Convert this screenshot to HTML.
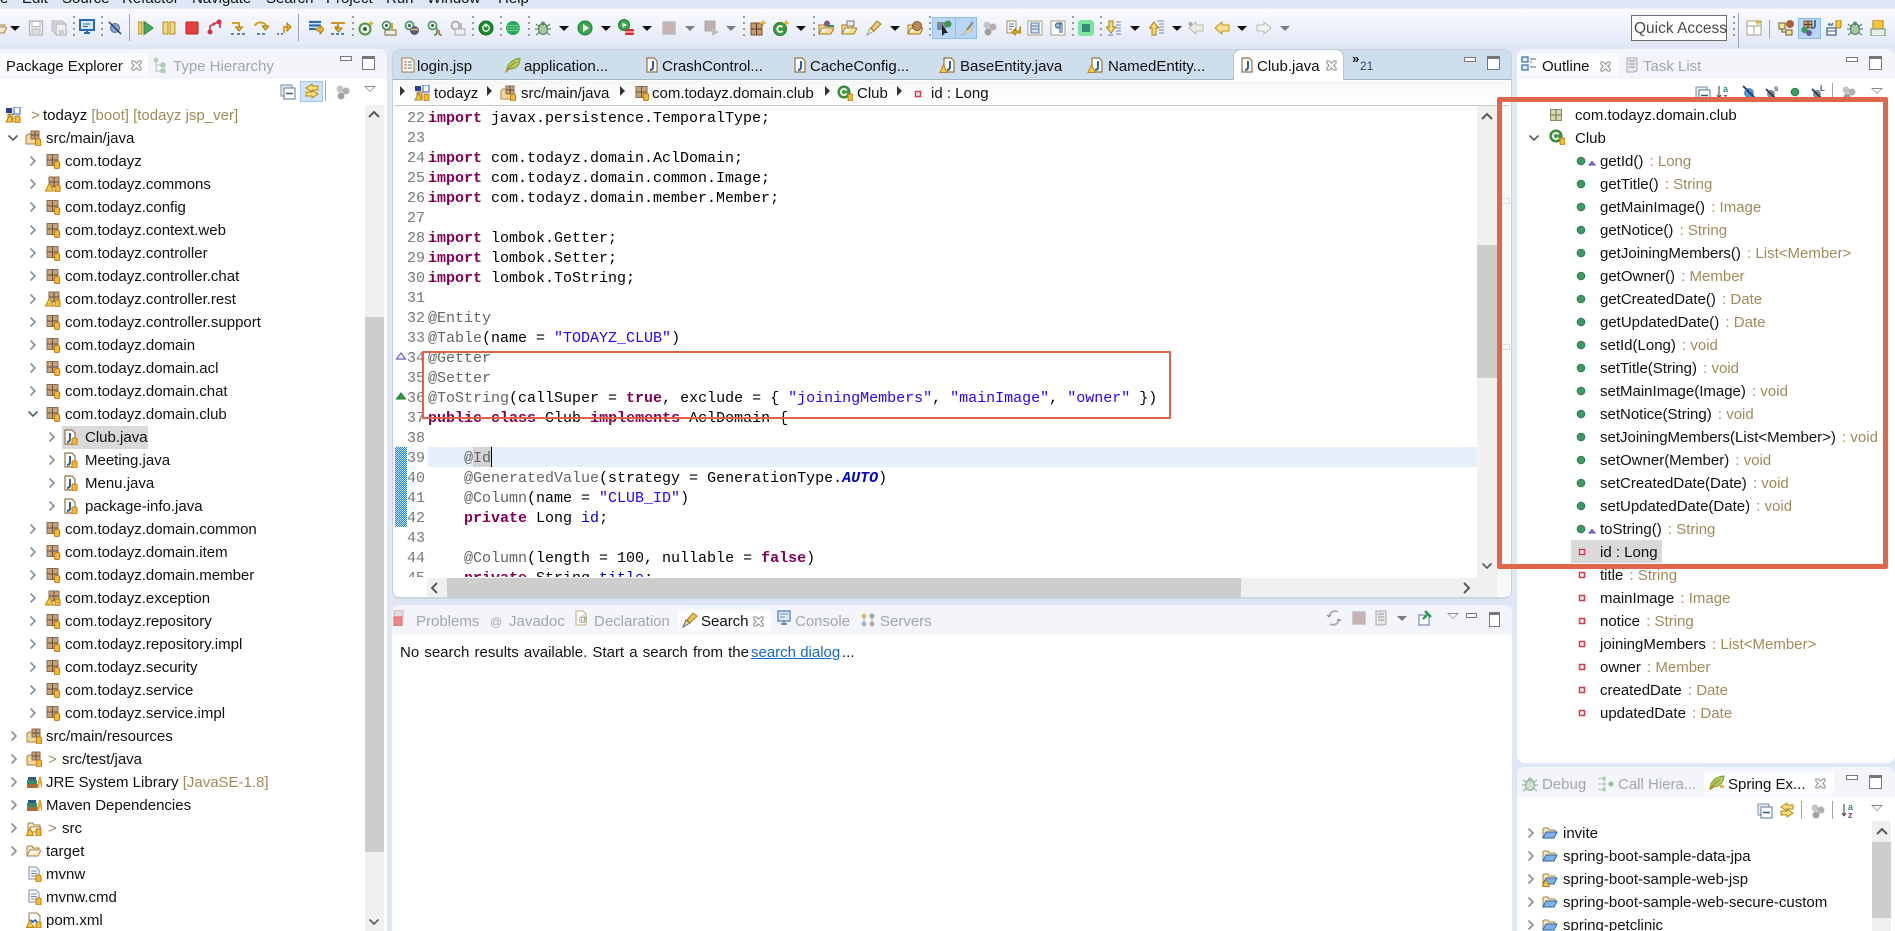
<!DOCTYPE html>
<html lang="en"><head><meta charset="utf-8"><title>Eclipse</title>
<style>
html,body{margin:0;padding:0;width:1895px;height:931px;overflow:hidden;background:#dfe6f6}
body{position:relative;font:15px/24px "Liberation Sans","Noto Sans CJK KR",sans-serif;color:#111}
.abs,.t,.i,.box{position:absolute}
.t{white-space:pre;line-height:24px;margin-top:1px}
.i{width:16px;height:16px;overflow:visible}
.menu span{position:absolute;top:-13px;white-space:pre;line-height:24px;font-size:15px}
.tb{position:absolute;left:0;top:8px;width:1895px;height:41px;background:linear-gradient(#fafbfe,#e0e6f5);border-top:1px solid #efefef;box-sizing:border-box}
.dots{position:absolute;top:16px;height:24px;width:2px;background:repeating-linear-gradient(#9a9a9a 0 2px,transparent 2px 6px)}
.sol{position:absolute;top:14px;height:27px;width:1px;background:#9fa5b0}
.dd{position:absolute;top:26px;width:0;height:0;border-left:5px solid transparent;border-right:5px solid transparent;border-top:5px solid #111;margin-left:-5px}
.dd.g{border-top-color:#7d7d7d}
.panel{position:absolute;background:#fff;border-radius:8px 8px 0 0;overflow:hidden}
.tabs{position:absolute;left:0;top:0;right:0;height:30px;background:#f3f5fb}
.act{position:absolute;top:0;height:30px;background:linear-gradient(#eef2fa,#fff 30%,#fff 60%,#f5f7fc);border-radius:8px 8px 0 0}
.gr{color:#a3a6ab}
.min{position:absolute;width:12px;height:5px;border:1px solid #777;box-sizing:border-box;background:#fff}
.max{position:absolute;width:13px;height:14px;border:1px solid #777;border-top-width:3px;box-sizing:border-box;background:#fff}
.menuv{position:absolute;width:0;height:0;border-left:6px solid transparent;border-right:6px solid transparent;border-top:6px solid #8a8a8a}
.menuv:after{content:"";position:absolute;left:-4px;top:-5px;border-left:4px solid transparent;border-right:4px solid transparent;border-top:4px solid #fff}
.cl{position:absolute;width:11px;height:11px;overflow:visible}
.r{position:absolute;left:0;height:16px;width:365px}
.r svg{position:absolute;top:0;width:16px;height:16px;overflow:visible}
.r span{position:absolute;top:-3px;line-height:24px;white-space:pre}
.p .a{left:25px}.p .b{left:45px}.p span{left:65px}
.q .a{left:6px}.q .b{left:26px}.q span{left:46px}
.u .a{left:44px}.u .b{left:62px}.u span{left:85px}
.n{color:#a18a5a;margin-left:2px}
.sb{position:absolute;background:#f0f0f0}
.th{position:absolute;background:#cdcdcd}
pre{margin:0;font:15px/20px "Liberation Mono",monospace;position:absolute}
b.k{color:#7f0055;font-weight:bold}
i.a{font-style:normal;color:#646464}
i.s{font-style:normal;color:#2a00ff}
i.f{font-style:normal;color:#0000c0}
b.e{color:#0000c0;font-style:italic;font-weight:bold}
.red{position:absolute;border:2px solid #d9654a;box-sizing:border-box}
.red2{position:absolute;border:5px solid #e0664a;box-sizing:border-box;border-radius:2px}
</style></head>
<body>
<svg width="0" height="0" style="position:absolute">
<defs>
<symbol id="x" viewBox="0 0 12 12"><path d="M1 1h2.500L6 3.500 8.500 1H11v2.500L8.500 6 11 8.500V11H8.500L6 8.500 3.500 11H1V8.500L3.500 6 1 3.500z" fill="#fff" stroke="#808080"/></symbol>
<symbol id="ar" viewBox="0 0 16 16"><path d="M5.500 3.500l4.500 4.500-4.500 4.500" fill="none" stroke="#8e8e8e" stroke-width="1.600"/></symbol>
<symbol id="ad" viewBox="0 0 16 16"><path d="M3.500 5.500l4.500 4.500 4.500-4.500" fill="none" stroke="#5a5a5a" stroke-width="1.600"/></symbol>
<symbol id="pkg" viewBox="0 0 16 16"><rect x="2" y="1.500" width="11" height="11" fill="#c7a37b" stroke="#8a6a50"/><path d="M7.500 1.500v11M2 7h11" stroke="#6e4f38"/><rect x="9.500" y="8.500" width="5" height="7" rx="1.400" fill="#f4b93a" stroke="#bf7c12"/></symbol>
<symbol id="pkw" viewBox="0 0 16 16"><rect x="4" y="1" width="10" height="10" fill="#c7a37b" stroke="#8a6a50"/><path d="M9 1v10M4 6h10" stroke="#6e4f38"/><rect x="10" y="9" width="5" height="7" rx="1.400" fill="#f4b93a" stroke="#bf7c12"/><path d="M4.500 7l4 8h-8z" fill="#f6c945" stroke="#b88313"/></symbol>
<symbol id="src" viewBox="0 0 16 16"><path d="M1 14V6l2-2h3l1 1h6v9z" fill="#f1d9a0" stroke="#a5824a"/><rect x="6" y="1" width="8" height="8" fill="#c7a37b" stroke="#8a6a50"/><path d="M10 1v8M6 5h8" stroke="#6e4f38"/><rect x="10.500" y="9" width="5" height="7" rx="1.400" fill="#f4b93a" stroke="#bf7c12"/></symbol>
<symbol id="prj" viewBox="0 0 16 16"><path d="M3 14V7h5v7z" fill="#e8c46c" stroke="#a5824a"/><rect x="1" y="1" width="6" height="5" fill="#2a3f9a"/><rect x="9" y="0" width="6" height="7" fill="#fff" stroke="#2a5ac8"/><rect x="10" y="9" width="5" height="7" rx="1.400" fill="#f4b93a" stroke="#bf7c12"/><path d="M5 8l3 7H1z" fill="#f6c945" stroke="#b88313"/></symbol>
<symbol id="jv" viewBox="0 0 16 16"><path d="M3 1h7l3 3v11H3z" fill="#fff" stroke="#8f7540" stroke-width="1.200"/><path d="M9 4v6q0 3-3 3" stroke="#2e5f99" stroke-width="2" fill="none"/></symbol>
<symbol id="jw" viewBox="0 0 16 16"><path d="M5 1h7l3 3v11H5z" fill="#fff" stroke="#8f7540" stroke-width="1.200"/><path d="M11 4v6q0 3-3 3" stroke="#2e5f99" stroke-width="2" fill="none"/><path d="M4.500 8l3.500 7.500H1z" fill="#f6c945" stroke="#b88313"/></symbol>
<symbol id="jd" viewBox="0 0 16 16"><path d="M3 1h7l3 3v11H3z" fill="#fff" stroke="#8f7540" stroke-width="1.200"/><path d="M8 4v6q0 3-3 3" stroke="#2e5f99" stroke-width="2" fill="none"/><rect x="10" y="9" width="5" height="7" rx="1.400" fill="#f4b93a" stroke="#bf7c12"/></symbol>
<symbol id="lib" viewBox="0 0 16 16"><rect x="1" y="10" width="11" height="4" fill="#a86c3c"/><rect x="1" y="6" width="10" height="4" fill="#3a8a6a"/><rect x="2" y="3" width="8" height="3" fill="#2a5c8c"/><path d="M12 14l2-11 2 11" fill="none" stroke="#e0a830" stroke-width="2"/></symbol>
<symbol id="fo" viewBox="0 0 16 16"><path d="M1 13V4l1-1h4l1 2h6v2H4l-3 6h11l3-6" fill="#f8e8bf" stroke="#a5824a"/></symbol>
<symbol id="fob" viewBox="0 0 16 16"><path d="M1 13V4l1-1h4l1 2h6v2" fill="#f8e8bf" stroke="#a5824a"/><path d="M4 7h11l-3 6H1z" fill="#7fb2e8" stroke="#2a66a8"/></symbol>
<symbol id="fow" viewBox="0 0 16 16"><path d="M1 13V4l1-1h4l1 2h6v2" fill="#f8e8bf" stroke="#a5824a"/><path d="M4 7h11l-3 6H1z" fill="#7fb2e8" stroke="#2a66a8"/><path d="M4 8l3.500 7.500H.5z" fill="#f6c945" stroke="#b88313"/></symbol>
<symbol id="fw" viewBox="0 0 16 16"><path d="M2 12V4l1-1h4l1 2h6v2H5l-3 5h10l3-5" fill="#f8e8bf" stroke="#a5824a"/><rect x="10" y="9" width="5" height="7" rx="1.400" fill="#f4b93a" stroke="#bf7c12"/><path d="M4 8l3.500 7.500H.5z" fill="#f6c945" stroke="#b88313"/></symbol>
<symbol id="doc" viewBox="0 0 16 16"><path d="M3 1h7l3 3v9H3z" fill="#fff" stroke="#7a8aa8"/><path d="M5 5h6M5 7.500h6M5 10h6" stroke="#6a8ac0"/><rect x="10" y="9" width="5" height="7" rx="1.400" fill="#f4b93a" stroke="#bf7c12"/></symbol>
<symbol id="xml" viewBox="0 0 16 16"><path d="M3 1h8l3 3v11H3z" fill="#fff" stroke="#a07a3c"/><path d="M5 8l2 2 2-2 2 2" stroke="#2a5ac8" fill="none" stroke-width="1.600"/><path d="M4 8l3.500 7.500H.5z" fill="#f6c945" stroke="#b88313"/><rect x="10" y="10" width="5" height="6" rx="1.400" fill="#f4b93a" stroke="#bf7c12"/></symbol>
<symbol id="m" viewBox="0 0 16 16"><circle cx="8" cy="8" r="3.800" fill="#3e9a63" stroke="#2d7a4d"/></symbol>
<symbol id="fd" viewBox="0 0 16 16"><rect x="5.500" y="5.500" width="5" height="5" fill="#fdf0f0" stroke="#d83c4c" stroke-width="1.500"/></symbol>
<symbol id="ov" viewBox="0 0 16 16"><path d="M8 6.500l3 3.500h-6z" fill="#9a8cd8" stroke="#5a48b0"/></symbol>
<symbol id="pk2" viewBox="0 0 16 16"><rect x="2.500" y="2.500" width="11" height="11" fill="#d8d8b0" stroke="#8a8a60"/><path d="M8 2.500v11M2.500 8h11" stroke="#6e6e4a"/></symbol>
<symbol id="cj" viewBox="0 0 16 16"><circle cx="7" cy="7" r="6" fill="#3e9a40" stroke="#2a7a2e"/><path d="M9.500 5.500a3 3 0 1 0 0 3" stroke="#fff" stroke-width="1.800" fill="none"/><rect x="11" y="9" width="5" height="7" rx="1.400" fill="#f4b93a" stroke="#bf7c12"/></symbol>
<symbol id="col" viewBox="0 0 16 16"><rect x="1" y="1" width="11" height="11" fill="#e8eef5" stroke="#7a8ea8"/><rect x="4" y="4" width="11" height="11" fill="#fff" stroke="#5a7a9a"/><path d="M6 9.500h7" stroke="#2a5f8a" stroke-width="1.500"/></symbol>
<symbol id="lnk" viewBox="0 0 16 16"><path d="M8 1L2 5l6 4V7h6V3H8z" fill="#f8dc80" stroke="#b68410"/><path d="M8 7l6 4-6 4v-2H2V9h6z" fill="#f8dc80" stroke="#b68410"/></symbol>
<symbol id="gry" viewBox="0 0 16 16"><circle cx="5" cy="5" r="3.500" fill="#c4c4c4"/><circle cx="11" cy="7" r="3.500" fill="#b0b0b0"/><circle cx="6" cy="12" r="3.500" fill="#a0a0a0"/></symbol>
<symbol id="save" viewBox="0 0 16 16"><rect x="1.500" y="1" width="13" height="14" fill="#eee" stroke="#b2b2b2" stroke-width="1.200"/><rect x="4" y="1.500" width="8" height="5" fill="#fff" stroke="#bbb"/><rect x="4" y="9" width="8" height="6" fill="#ddd" stroke="#bbb"/></symbol>
<symbol id="savea" viewBox="0 0 16 16"><rect x="1" y="0" width="10" height="11" fill="#e8e8e8" stroke="#bbb"/><rect x="3" y="2" width="10" height="11" fill="#eee" stroke="#b5b5b5"/><rect x="5" y="4" width="10" height="11" fill="#eee" stroke="#aaa"/><rect x="8" y="10" width="5" height="5" fill="#ccc"/></symbol>
<symbol id="scr" viewBox="0 0 16 16"><rect x="1" y="1" width="14" height="10" fill="#d8e8f8" stroke="#2a6ab0" stroke-width="2"/><path d="M4 5h7M4 7.500h5" stroke="#2a6ab0"/><path d="M5 14h6M8 11v3" stroke="#2a6ab0" stroke-width="2"/></symbol>
<symbol id="skip" viewBox="0 0 16 16"><circle cx="8" cy="8" r="4.500" fill="#8aa8d0" stroke="#4a6a98"/><path d="M2 2l12 12" stroke="#2a4a80" stroke-width="1.600"/></symbol>
<symbol id="res" viewBox="0 0 16 16"><rect x="0" y="2" width="4" height="12" fill="#f0d060" stroke="#b89020"/><path d="M6 1.500l9 6.500-9 6.500z" fill="#4aa85a" stroke="#2f8040"/></symbol>
<symbol id="pau" viewBox="0 0 16 16"><rect x="2" y="2" width="5" height="12" fill="#f0d880" stroke="#b89020"/><rect x="9" y="2" width="5" height="12" fill="#f0d880" stroke="#b89020"/></symbol>
<symbol id="stp" viewBox="0 0 16 16"><rect x="2" y="2" width="12" height="12" rx="1" fill="#e84040" stroke="#b82020"/></symbol>
<symbol id="dis" viewBox="0 0 16 16"><path d="M3 14V7l10-5v7" fill="none" stroke="#c03040" stroke-width="1.500"/><circle cx="3" cy="13" r="2.500" fill="#d83040"/><circle cx="12" cy="3" r="2.500" fill="#d83040"/><circle cx="7" cy="5" r="1.500" fill="#d83040"/></symbol>
<symbol id="si" viewBox="0 0 16 16"><path d="M2 3h7v5" fill="none" stroke="#d8a020" stroke-width="2"/><path d="M5.500 7h7L9 11z" fill="#f0c030" stroke="#a87c10"/><path d="M1 14h3M7 14h3M12 14h3" stroke="#2a5f9a" stroke-width="1.500"/></symbol>
<symbol id="so" viewBox="0 0 16 16"><path d="M2 6a5.500 4 0 0 1 11 1" fill="none" stroke="#d8a020" stroke-width="2"/><path d="M9 6h7l-3.500 4z" fill="#f0c030" stroke="#a87c10"/><path d="M4 14h3M9 14h3" stroke="#2a5f9a" stroke-width="1.500"/></symbol>
<symbol id="sr" viewBox="0 0 16 16"><path d="M8 13V7h4" fill="none" stroke="#d8a020" stroke-width="2"/><path d="M11 3v8l4-4z" fill="#f0c030" stroke="#a87c10"/><path d="M1 14h2M5 14h2" stroke="#2a5f9a" stroke-width="1.500"/></symbol>
<symbol id="drp" viewBox="0 0 16 16"><path d="M1 2h12M1 5.500h12M1 9h7" stroke="#2a6ab0" stroke-width="2.200"/><path d="M9 8h3V5l4 4.500-4 4.500v-3H9z" fill="#f0c030" stroke="#a87c10"/></symbol>
<symbol id="flt" viewBox="0 0 16 16"><path d="M1 3h14M5 7h3M8 3v8" stroke="#c89420" stroke-width="2" fill="none"/><path d="M5 8h7l-3.500 4z" fill="#f0c030" stroke="#a87c10"/><path d="M1 14h3M6 14h3M11 14h3" stroke="#2a5f9a" stroke-width="1.500"/></symbol>
<symbol id="ring" viewBox="0 0 16 16"><circle cx="7" cy="9" r="5.500" fill="#fff" stroke="#4a9a3a" stroke-width="2"/><circle cx="7" cy="9" r="2" fill="#2a6a3a"/><path d="M13 1v5M10.500 3.500h5" stroke="#e0b030" stroke-width="1.500"/></symbol>
<symbol id="ring2" viewBox="0 0 16 16"><circle cx="5.500" cy="5.500" r="4" fill="#fff" stroke="#4a9a6a" stroke-width="1.800"/><circle cx="5.500" cy="5.500" r="1.500" fill="#2a6a3a"/><rect x="4" y="10" width="11" height="5" fill="#eee" stroke="#7a6a30"/><path d="M11 3v6" stroke="#d8a020" stroke-width="2"/></symbol>
<symbol id="ring3" viewBox="0 0 16 16"><circle cx="5.500" cy="5.500" r="4" fill="#fff" stroke="#4a9a6a" stroke-width="1.800"/><circle cx="5.500" cy="5.500" r="1.500" fill="#2a6a3a"/><circle cx="10.500" cy="10.500" r="4.500" fill="#5a5a7a"/><path d="M7 9.500h7" stroke="#e8c060" stroke-width="1.600"/></symbol>
<symbol id="ring4" viewBox="0 0 16 16"><circle cx="5.500" cy="5.500" r="4" fill="#fff" stroke="#4a9a6a" stroke-width="1.800"/><circle cx="5.500" cy="5.500" r="1.500" fill="#2a6a3a"/><path d="M7 15q3 0 3-3V8" stroke="#3a8a3a" stroke-width="1.500" fill="none"/><path d="M12 10v3q0 2 3 2" stroke="#c03838" stroke-width="1.300" fill="none"/></symbol>
<symbol id="ring5" viewBox="0 0 16 16"><circle cx="5.500" cy="5.500" r="4" fill="#eee" stroke="#aaa" stroke-width="1.800"/><rect x="5" y="9" width="10" height="6" fill="#eee" stroke="#aaa"/><path d="M11 3v6" stroke="#bbb" stroke-width="2"/></symbol>
<symbol id="pow" viewBox="0 0 16 16"><circle cx="8" cy="8" r="7" fill="#1a8a2a" stroke="#0e6a1a"/><circle cx="8" cy="8" r="3.200" fill="none" stroke="#fff" stroke-width="1.300"/><path d="M8 3.500v4" stroke="#fff" stroke-width="1.500"/></symbol>
<symbol id="bal" viewBox="0 0 16 16"><circle cx="8" cy="8" r="7" fill="#2aa85a"/><path d="M1 5.500h14M1 8h14M1 10.500h14" stroke="#8ad8a8" stroke-width=".8"/></symbol>
<symbol id="bug" viewBox="0 0 16 16"><ellipse cx="8" cy="9" rx="4.500" ry="5.500" fill="#a8c898" stroke="#4a7a5a"/><circle cx="8" cy="3.500" r="2" fill="#5a8a7a"/><path d="M1 4l4 3M15 4l-4 3M0 9h4M16 9h-4M1 15l4-3M15 15l-4-3" stroke="#3a6a5a"/></symbol>
<symbol id="run" viewBox="0 0 16 16"><circle cx="8" cy="8" r="7" fill="#3aa84a" stroke="#1e7a30"/><path d="M6 4l6 4-6 4z" fill="#fff"/></symbol>
<symbol id="rex" viewBox="0 0 16 16"><circle cx="6" cy="6" r="5.500" fill="#3aa84a" stroke="#1e7a30"/><path d="M4.500 3.500l4.500 2.500-4.500 2.500z" fill="#fff"/><rect x="7" y="10" width="9" height="6" rx="1" fill="#e02828"/><path d="M7 13h9" stroke="#fff"/></symbol>
<symbol id="sg" viewBox="0 0 16 16"><rect x="2" y="2" width="12" height="12" fill="#c8b2b4" stroke="#bbb" stroke-width="1.500"/></symbol>
<symbol id="g2" viewBox="0 0 16 16"><rect x="1" y="1" width="10" height="10" fill="#c4aeb0" stroke="#aaa"/><path d="M8 8l7 4-7 4z" fill="#b8c0b8"/></symbol>
<symbol id="npk" viewBox="0 0 16 16"><rect x="1" y="3" width="11" height="12" fill="#c79a6b" stroke="#7a5630"/><path d="M6.500 3v12M1 9h11" stroke="#5a3a20"/><path d="M13 0v6M10 3h6" stroke="#e0b030" stroke-width="1.500"/></symbol>
<symbol id="ncl" viewBox="0 0 16 16"><circle cx="7" cy="9" r="6.500" fill="#3e9a40" stroke="#2a7a2e"/><path d="M9.500 7a3 3 0 1 0 0 4" stroke="#fff" stroke-width="1.800" fill="none"/><path d="M13 0v6M10 3h6" stroke="#e0b030" stroke-width="1.500"/></symbol>
<symbol id="op1" viewBox="0 0 16 16"><path d="M1 14V5h5l1 1h5v2H4l-3 6h12l3-6H13" fill="#f8dc90" stroke="#a87c20"/><circle cx="9" cy="3.500" r="3" fill="#7a5a9a"/><path d="M10 6h6" stroke="#3a8a5a" stroke-width="2"/></symbol>
<symbol id="op2" viewBox="0 0 16 16"><path d="M1 14V5h5l1 1h5v2H4l-3 6h12l3-6H13" fill="#f8dc90" stroke="#a87c20"/><rect x="6" y="1" width="7" height="5" fill="#eee" stroke="#777"/></symbol>
<symbol id="tor" viewBox="0 0 16 16"><path d="M1 15l3-7 4 3z" fill="#f8f0a0" stroke="#a0a0a0"/><path d="M5 8l6-7 4 3-7 7z" fill="#f0c878" stroke="#a87c20"/></symbol>
<symbol id="op3" viewBox="0 0 16 16"><path d="M1 14V5h5l1 1h5v2H4l-3 6h12l3-6H13" fill="#f8dc90" stroke="#a87c20"/><circle cx="10" cy="6" r="4.500" fill="#c08858" stroke="#7a5630"/></symbol>
<symbol id="mbk" viewBox="0 0 16 16"><rect x="1" y="2" width="9" height="8" fill="#7a8a9a"/><circle cx="12" cy="4" r="3.500" fill="#3a9a4a"/><path d="M6 5v11l3-3 3 0z" fill="#222"/></symbol>
<symbol id="hl" viewBox="0 0 16 16"><path d="M1 15q5-1 7-5l6-8-2 9q-4 3-11 4z" fill="#e8e070" stroke="#bbb"/><path d="M8 10l6-8" stroke="#888" stroke-width="2"/></symbol>
<symbol id="pgb" viewBox="0 0 16 16"><rect x="2" y="1" width="9" height="12" fill="#fff" stroke="#a08a50"/><path d="M4 4h5M4 6.500h5M4 9h3" stroke="#5a7aa8"/><path d="M15 7v4h-5v-2l-3 3 3 3v-2h6V7z" fill="#f0c030" stroke="#a87c10"/></symbol>
<symbol id="lst" viewBox="0 0 16 16"><rect x="1" y="1" width="14" height="14" fill="#fff" stroke="#a8a080"/><rect x="4" y="3" width="8" height="10" fill="#d8e4f4" stroke="#5a7aa8"/><path d="M4 6h8M4 9h8" stroke="#5a7aa8"/></symbol>
<symbol id="pil" viewBox="0 0 16 16"><rect x="1" y="1" width="14" height="14" fill="#fff" stroke="#a8a080"/><path d="M10 3v10M12 3v10M12 3H8a2.500 2.500 0 0 0 0 5h2" fill="#9ab8d8" stroke="#4a6f9a" stroke-width="1.200"/></symbol>
<symbol id="grn" viewBox="0 0 16 16"><rect x="0" y="0" width="16" height="16" rx="3" fill="#7ce49c"/><rect x="4" y="4" width="8" height="8" fill="#3a8a7a"/></symbol>
<symbol id="dn" viewBox="0 0 16 16"><path d="M3 1h4v6h2.500L5 13 .5 7H3z" fill="#f8dc70" stroke="#a87c10"/><path d="M10 2h5M10 5h5M10 8h5M10 11h5M10 14h5M2 15h5" stroke="#6a8ab0"/></symbol>
<symbol id="up" viewBox="0 0 16 16"><path d="M3 15h4V8h2.500L5 2 .5 8H3z" fill="#f8dc70" stroke="#a87c10"/><path d="M8 1h7M10 4h5M10 7h5M10 10h5M10 13h5" stroke="#6a8ab0"/></symbol>
<symbol id="bk" viewBox="0 0 16 16"><path d="M8 2v3h7v6H8v3L1 8z" fill="#f8e090" stroke="#c09020"/></symbol>
<symbol id="bkg" viewBox="0 0 16 16"><path d="M8 2v3h7v6H8v3L1 8z" fill="#ecece0" stroke="#bbb"/><circle cx="2.500" cy="4" r="2" fill="#aaa"/></symbol>
<symbol id="fwd" viewBox="0 0 16 16"><path d="M8 2v3H1v6h7v3l7-6z" fill="#f4f4f4" stroke="#bbb"/></symbol>
<symbol id="wk" viewBox="0 0 16 16"><rect x="1" y="1" width="14" height="14" fill="#fff" stroke="#a8a080"/><path d="M1 6h14M8 6v9" stroke="#a8a080"/><path d="M12 0v5M9.500 2.500h5" stroke="#e0b030" stroke-width="1.500"/></symbol>
<symbol id="p1" viewBox="0 0 16 16"><rect x="1" y="3" width="6" height="6" fill="#f4e8a0" stroke="#6a5a20"/><rect x="8" y="10" width="6" height="5" fill="#f4e8a0" stroke="#6a5a20"/><circle cx="12" cy="4" r="4" fill="#a8623a"/><path d="M4 9v3h4" stroke="#6a5a20" fill="none"/></symbol>
<symbol id="p2" viewBox="0 0 16 16"><rect x="3" y="1" width="8" height="7" fill="#c79a6b" stroke="#7a5630"/><path d="M7 1v7M3 4.500h8" stroke="#5a3a20"/><path d="M14 0v6q0 2-3 2" stroke="#2a5a9a" stroke-width="1.600" fill="none"/><circle cx="3.500" cy="10" r="3.200" fill="#3e9a63"/><circle cx="8" cy="13" r="3" fill="#6a5a9a"/></symbol>
<symbol id="p3" viewBox="0 0 16 16"><rect x="1" y="8" width="9" height="7" fill="#fff" stroke="#3a5a8a" stroke-width="1.200"/><path d="M1 11h9" stroke="#3a5a8a"/><path d="M2 5h5M2 5l2-2M7 3L5 5" stroke="#2a5f8a"/><rect x="10" y="0" width="5" height="8" rx="1.500" fill="#f4c83a" stroke="#bf7c12"/></symbol>
<symbol id="p5" viewBox="0 0 16 16"><rect x="3" y="0" width="10" height="12" rx="1" fill="#f4c83a" stroke="#bf7c12"/><rect x="1" y="9" width="14" height="7" fill="#e8f0e8" stroke="#6a8a6a"/></symbol>
<symbol id="ol" viewBox="0 0 16 16"><rect x="1" y="1" width="6" height="5" fill="#e0ecf8" stroke="#2a6ab0" stroke-width="1.200"/><rect x="1" y="9" width="6" height="5" fill="#e0ecf8" stroke="#2a6ab0" stroke-width="1.200"/><path d="M9 3h6M9 6h2M9 11h6" stroke="#5a6a80"/></symbol>
<symbol id="tsk" viewBox="0 0 16 16"><path d="M3 1h10v13l-3 1H3z" fill="#e8e8e8" stroke="#aaa"/><path d="M5 4h6M5 7h6M5 10h6" stroke="#999"/></symbol>
<symbol id="th" viewBox="0 0 16 16"><circle cx="3" cy="3" r="2.500" fill="#b8d4b8"/><circle cx="10" cy="8" r="2.800" fill="#a8d0b0"/><circle cx="10" cy="14" r="2.800" fill="#a8d0b0"/><path d="M3 3v11h5M3 8h5" stroke="#bbb" fill="none"/></symbol>
<symbol id="lg" viewBox="0 0 16 16"><path d="M2 1h9l3 3v11H2z" fill="#fff" stroke="#a07a3c"/><path d="M4 5h3M4 8h3M4 11h3" stroke="#d04040"/><path d="M8 5h4M8 8h4M8 11h4" stroke="#4a8a4a"/></symbol>
<symbol id="leaf" viewBox="0 0 16 16"><path d="M1 15q2-12 14-14q0 11-11 11z" fill="#a8d060" stroke="#7a9a30"/><path d="M1 15Q6 8 11 5" stroke="#c87830" stroke-width="1.200" fill="none"/></symbol>
<symbol id="prb" viewBox="0 0 16 16"><rect x="3" y="0" width="9" height="7" fill="#e8d8d8" stroke="#bbb"/><rect x="3" y="7" width="8" height="9" fill="#e88" stroke="#d66"/></symbol>
<symbol id="dcl" viewBox="0 0 16 16"><path d="M3 1h7l3 3v11H3z" fill="#fff" stroke="#c8a878"/><text x="5.500" y="12" font-size="9" fill="#8a8a60" font-family="Liberation Sans">@</text></symbol>
<symbol id="srv" viewBox="0 0 16 16"><circle cx="4" cy="4" r="2.500" fill="#e0c070"/><circle cx="12" cy="4" r="2.500" fill="#8ab0a0"/><circle cx="4" cy="12" r="2.500" fill="#a0b8d0"/><circle cx="12" cy="12" r="2.500" fill="#c0a8a0"/><path d="M4 4v8M12 4v8" stroke="#aaa"/></symbol>
<symbol id="con" viewBox="0 0 16 16"><rect x="2" y="1" width="12" height="10" fill="#dce8f4" stroke="#6a90b8" stroke-width="1.500"/><path d="M4 4h8M4 7h5" stroke="#6a90b8"/><path d="M5 14h6M8 11v3" stroke="#6a90b8" stroke-width="2"/></symbol>
<symbol id="srch" viewBox="0 0 16 16"><path d="M1 15l3-7 4 3z" fill="#e8d8a0" stroke="#666"/><path d="M5 8l6-7 4 3-7 7z" fill="#f0c050" stroke="#a87c20"/></symbol>
<symbol id="ref" viewBox="0 0 16 16"><path d="M12 2a6 6 0 0 0-9 5M4 14a6 6 0 0 0 9-5" fill="none" stroke="#aaa" stroke-width="1.800"/><path d="M3 7l-2-2M3 7l2-2M13 9l-2 2M13 9l2 2" stroke="#888"/></symbol>
<symbol id="pin" viewBox="0 0 16 16"><path d="M2 5h10v10H2z" fill="#fff" stroke="#5a7aa8"/><path d="M6 9l4-4M8 1l6 6" stroke="#2a9a4a" stroke-width="2.400"/></symbol>
<symbol id="dbg" viewBox="0 0 16 16"><ellipse cx="8" cy="9" rx="4.500" ry="5.500" fill="#cfe0c8" stroke="#8aa898"/><circle cx="8" cy="3.500" r="2" fill="#9ab8a8"/><path d="M1 4l4 3M15 4l-4 3M0 9h4M16 9h-4M1 15l4-3M15 15l-4-3" stroke="#8aa898"/></symbol>
<symbol id="clh" viewBox="0 0 16 16"><circle cx="6" cy="2.500" r="2" fill="#a8d0b0"/><circle cx="13" cy="8" r="2.500" fill="#8fc0a0"/><circle cx="6" cy="13.500" r="2" fill="#a8d0b0"/><path d="M0 8h9M0 2.500h4M0 13.500h4M6 4v8" stroke="#bbb"/></symbol>
<symbol id="sprg" viewBox="0 0 16 16"><path d="M1 14q1-12 14-13q-1 10-10 11z" fill="#a8d060" stroke="#7a9a30"/><path d="M1 15Q5 8 11 5" stroke="#c87830" stroke-width="1.200" fill="none"/><rect x="11" y="10" width="4" height="3" fill="#e8b060"/></symbol>
<symbol id="az" viewBox="0 0 16 16"><path d="M3 2v12M3 14l-2-3M3 14l2-3" stroke="#5a5a5a" fill="none" stroke-width="1.200"/><text x="7" y="8" font-family="Liberation Sans" font-weight="bold" font-size="9" fill="#2a8a8a">a</text><text x="7" y="16" font-family="Liberation Sans" font-weight="bold" font-size="9" fill="#8a3a9a">z</text></symbol>
<symbol id="hf" viewBox="0 0 16 16"><circle cx="8" cy="9" r="5" fill="#5a90c8"/><path d="M2 2l12 12" stroke="#1a3a6a" stroke-width="1.800"/></symbol>
<symbol id="hs" viewBox="0 0 16 16"><circle cx="7" cy="10" r="4" fill="#8a8a8a"/><path d="M2 5l10 10" stroke="#1a3a6a" stroke-width="1.800"/><text x="10" y="7" font-size="8" fill="#2a5a9a" font-family="Liberation Sans" font-weight="bold">s</text></symbol>
<symbol id="hl2" viewBox="0 0 16 16"><circle cx="7" cy="10" r="4" fill="#8a8a8a"/><path d="M2 5l10 10" stroke="#1a3a6a" stroke-width="1.800"/><text x="10" y="7" font-size="8" fill="#2a5a9a" font-family="Liberation Sans" font-weight="bold">L</text></symbol>
</defs></svg>

<!-- menu -->
<div class="menu">
<span style="left:0">e</span><span style="left:22px">Edit</span><span style="left:62px">Source</span><span style="left:122px">Refactor</span><span style="left:192px">Navigate</span><span style="left:266px">Search</span><span style="left:326px">Project</span><span style="left:386px">Run</span><span style="left:427px">Window</span><span style="left:498px">Help</span>
</div>

<!-- toolbar -->
<div class="tb"></div>
<svg class="i" style="left:-8px;top:20px"><use href="#fo"/></svg>
<div class="dd" style="left:15px"></div>
<svg class="i" style="left:28px;top:20px"><use href="#save"/></svg>
<svg class="i" style="left:51px;top:20px"><use href="#savea"/></svg>
<div class="dots" style="left:73px"></div>
<svg class="i" style="left:79px;top:19px"><use href="#scr"/></svg>
<div class="dots" style="left:101px"></div>
<svg class="i" style="left:107px;top:20px"><use href="#skip"/></svg>
<div class="sol" style="left:129px"></div>
<svg class="i" style="left:138px;top:20px"><use href="#res"/></svg>
<svg class="i" style="left:161px;top:20px"><use href="#pau"/></svg>
<svg class="i" style="left:184px;top:20px"><use href="#stp"/></svg>
<svg class="i" style="left:207px;top:19px"><use href="#dis"/></svg>
<svg class="i" style="left:230px;top:20px"><use href="#si"/></svg>
<svg class="i" style="left:253px;top:20px"><use href="#so"/></svg>
<svg class="i" style="left:276px;top:20px"><use href="#sr"/></svg>
<div class="sol" style="left:298px"></div>
<svg class="i" style="left:308px;top:20px"><use href="#drp"/></svg>
<svg class="i" style="left:330px;top:20px"><use href="#flt"/></svg>
<div class="dots" style="left:352px"></div>
<svg class="i" style="left:358px;top:20px"><use href="#ring"/></svg>
<svg class="i" style="left:381px;top:20px"><use href="#ring2"/></svg>
<svg class="i" style="left:404px;top:20px"><use href="#ring3"/></svg>
<svg class="i" style="left:427px;top:20px"><use href="#ring4"/></svg>
<svg class="i" style="left:450px;top:20px"><use href="#ring5"/></svg>
<div class="dots" style="left:472px"></div>
<svg class="i" style="left:478px;top:20px"><use href="#pow"/></svg>
<div class="dots" style="left:500px"></div>
<svg class="i" style="left:505px;top:20px"><use href="#bal"/></svg>
<div class="dots" style="left:528px"></div>
<svg class="i" style="left:535px;top:20px"><use href="#bug"/></svg>
<div class="dd" style="left:564px"></div>
<svg class="i" style="left:577px;top:20px"><use href="#run"/></svg>
<div class="dd" style="left:606px"></div>
<svg class="i" style="left:618px;top:19px"><use href="#rex"/></svg>
<div class="dd" style="left:647px"></div>
<svg class="i" style="left:661px;top:20px"><use href="#sg"/></svg>
<div class="dd g" style="left:690px"></div>
<svg class="i" style="left:704px;top:20px"><use href="#g2"/></svg>
<div class="dd g" style="left:731px"></div>
<div class="dots" style="left:743px"></div>
<svg class="i" style="left:750px;top:20px"><use href="#npk"/></svg>
<svg class="i" style="left:773px;top:20px"><use href="#ncl"/></svg>
<div class="dd" style="left:801px"></div>
<div class="dots" style="left:813px"></div>
<svg class="i" style="left:818px;top:20px"><use href="#op1"/></svg>
<svg class="i" style="left:841px;top:20px"><use href="#op2"/></svg>
<svg class="i" style="left:866px;top:20px"><use href="#tor"/></svg>
<div class="dd" style="left:895px"></div>
<svg class="i" style="left:907px;top:20px"><use href="#op3"/></svg>
<div class="dots" style="left:929px"></div>
<div class="box" style="left:932px;top:17px;width:45px;height:22px;background:#b9d6f6;border:1px solid #8cbcee;box-sizing:border-box"></div>
<div class="box" style="left:955px;top:17px;width:1px;height:22px;background:#8cbcee"></div>
<svg class="i" style="left:936px;top:20px"><use href="#mbk"/></svg>
<svg class="i" style="left:959px;top:20px"><use href="#hl"/></svg>
<svg class="i" style="left:982px;top:20px"><use href="#gry"/></svg>
<svg class="i" style="left:1005px;top:20px"><use href="#pgb"/></svg>
<svg class="i" style="left:1027px;top:20px"><use href="#lst"/></svg>
<svg class="i" style="left:1050px;top:20px"><use href="#pil"/></svg>
<div class="dots" style="left:1072px"></div>
<svg class="i" style="left:1078px;top:20px"><use href="#grn"/></svg>
<div class="dots" style="left:1100px"></div>
<svg class="i" style="left:1106px;top:20px"><use href="#dn"/></svg>
<div class="dd" style="left:1135px"></div>
<svg class="i" style="left:1149px;top:20px"><use href="#up"/></svg>
<div class="dd" style="left:1177px"></div>
<svg class="i" style="left:1188px;top:20px"><use href="#bkg"/></svg>
<svg class="i" style="left:1214px;top:20px"><use href="#bk"/></svg>
<div class="dd" style="left:1242px"></div>
<svg class="i" style="left:1256px;top:20px"><use href="#fwd"/></svg>
<div class="dd g" style="left:1285px"></div>
<div class="box" style="left:1631px;top:15px;width:96px;height:26px;border:1px solid #6b6b6b;background:#fff;box-sizing:border-box"></div>
<div class="t" style="left:1634px;top:16px;color:#4a4a4a;font-size:15.5px">Quick Access</div>
<div class="dots" style="left:1733px"></div>
<div class="sol" style="left:1738px;height:35px;top:13px"></div>
<svg class="i" style="left:1746px;top:20px"><use href="#wk"/></svg>
<div class="sol" style="left:1769px;top:20px;height:18px"></div>
<svg class="i" style="left:1778px;top:20px"><use href="#p1"/></svg>
<div class="box" style="left:1798px;top:18px;width:23px;height:21px;background:#b9d6f6;border:1px solid #8cbcee;box-sizing:border-box"></div>
<svg class="i" style="left:1801px;top:20px"><use href="#p2"/></svg>
<svg class="i" style="left:1826px;top:20px"><use href="#p3"/></svg>
<svg class="i" style="left:1847px;top:20px"><use href="#bug"/></svg>
<svg class="i" style="left:1870px;top:20px"><use href="#p5"/></svg>

<!-- LEFT PANEL -->
<div class="panel" style="left:0;top:49px;width:387px;height:882px;border-radius:0 8px 0 0">
 <div class="tabs"></div>
 <div class="act" style="left:0;width:148px;border-radius:0 8px 0 0"></div>
 <div class="t" style="left:6px;top:5px;font-size:14.8px">Package Explorer</div>
 <svg class="cl" style="left:131px;top:11px"><use href="#x"/></svg>
 <svg class="i" style="left:153px;top:8px"><use href="#th"/></svg>
 <div class="t gr" style="left:173px;top:5px">Type Hierarchy</div>
 <div class="min" style="left:340px;top:7px"></div><div class="max" style="left:362px;top:7px"></div>
 <svg class="i" style="left:280px;top:35px"><use href="#col"/></svg>
 <div class="box" style="left:300px;top:32px;width:23px;height:21px;background:#cfe4fa;border:1px solid #9cc8f2;box-sizing:border-box"></div>
 <svg class="i" style="left:304px;top:34px"><use href="#lnk"/></svg>
 <div class="sol" style="left:325px;top:32px;height:20px"></div>
 <svg class="i" style="left:335px;top:35px"><use href="#gry"/></svg>
 <div class="menuv" style="left:364px;top:37px"></div>
 <div class="sb" style="left:365px;top:56px;width:19px;height:826px"></div>
 <div class="th" style="left:365px;top:268px;width:19px;height:535px"></div>
 <svg class="i" style="left:366px;top:57px"><path d="M3 11l5-5 5 5" fill="none" stroke="#5a5a5a" stroke-width="2"/></svg>
 <svg class="i" style="left:366px;top:865px"><use href="#ad"/></svg>
</div>

<!-- left tree -->
<div class="r q" style="top:107px"><svg class="b" style="left:5px"><use href="#prj"/></svg><span style="left:31px;color:#a18a5a">&gt;</span><span style="left:43px">todayz <span class="n" style="position:static;margin-left:0">[boot] [todayz jsp_ver]</span></span></div>
<div class="r" style="top:130px"><svg style="left:5px"><use href="#ad"/></svg><svg style="left:25px"><use href="#src"/></svg><span style="left:46px">src/main/java</span></div>
<div class="r p" style="top:153px"><svg class="a"><use href="#ar"/></svg><svg class="b"><use href="#pkg"/></svg><span>com.todayz</span></div>
<div class="r p" style="top:176px"><svg class="a"><use href="#ar"/></svg><svg class="b"><use href="#pkw"/></svg><span>com.todayz.commons</span></div>
<div class="r p" style="top:199px"><svg class="a"><use href="#ar"/></svg><svg class="b"><use href="#pkg"/></svg><span>com.todayz.config</span></div>
<div class="r p" style="top:222px"><svg class="a"><use href="#ar"/></svg><svg class="b"><use href="#pkg"/></svg><span>com.todayz.context.web</span></div>
<div class="r p" style="top:245px"><svg class="a"><use href="#ar"/></svg><svg class="b"><use href="#pkg"/></svg><span>com.todayz.controller</span></div>
<div class="r p" style="top:268px"><svg class="a"><use href="#ar"/></svg><svg class="b"><use href="#pkg"/></svg><span>com.todayz.controller.chat</span></div>
<div class="r p" style="top:291px"><svg class="a"><use href="#ar"/></svg><svg class="b"><use href="#pkw"/></svg><span>com.todayz.controller.rest</span></div>
<div class="r p" style="top:314px"><svg class="a"><use href="#ar"/></svg><svg class="b"><use href="#pkg"/></svg><span>com.todayz.controller.support</span></div>
<div class="r p" style="top:337px"><svg class="a"><use href="#ar"/></svg><svg class="b"><use href="#pkg"/></svg><span>com.todayz.domain</span></div>
<div class="r p" style="top:360px"><svg class="a"><use href="#ar"/></svg><svg class="b"><use href="#pkg"/></svg><span>com.todayz.domain.acl</span></div>
<div class="r p" style="top:383px"><svg class="a"><use href="#ar"/></svg><svg class="b"><use href="#pkg"/></svg><span>com.todayz.domain.chat</span></div>
<div class="r p" style="top:406px"><svg class="a"><use href="#ad"/></svg><svg class="b"><use href="#pkg"/></svg><span>com.todayz.domain.club</span></div>
<div class="box" style="left:62px;top:426px;width:86px;height:23px;background:#d9d9d9"></div>
<div class="r u" style="top:429px"><svg class="a"><use href="#ar"/></svg><svg class="b"><use href="#jd"/></svg><span>Club.java</span></div>
<div class="r u" style="top:452px"><svg class="a"><use href="#ar"/></svg><svg class="b"><use href="#jd"/></svg><span>Meeting.java</span></div>
<div class="r u" style="top:475px"><svg class="a"><use href="#ar"/></svg><svg class="b"><use href="#jd"/></svg><span>Menu.java</span></div>
<div class="r u" style="top:498px"><svg class="a"><use href="#ar"/></svg><svg class="b"><use href="#jd"/></svg><span>package-info.java</span></div>
<div class="r p" style="top:521px"><svg class="a"><use href="#ar"/></svg><svg class="b"><use href="#pkg"/></svg><span>com.todayz.domain.common</span></div>
<div class="r p" style="top:544px"><svg class="a"><use href="#ar"/></svg><svg class="b"><use href="#pkg"/></svg><span>com.todayz.domain.item</span></div>
<div class="r p" style="top:567px"><svg class="a"><use href="#ar"/></svg><svg class="b"><use href="#pkg"/></svg><span>com.todayz.domain.member</span></div>
<div class="r p" style="top:590px"><svg class="a"><use href="#ar"/></svg><svg class="b"><use href="#pkw"/></svg><span>com.todayz.exception</span></div>
<div class="r p" style="top:613px"><svg class="a"><use href="#ar"/></svg><svg class="b"><use href="#pkg"/></svg><span>com.todayz.repository</span></div>
<div class="r p" style="top:636px"><svg class="a"><use href="#ar"/></svg><svg class="b"><use href="#pkg"/></svg><span>com.todayz.repository.impl</span></div>
<div class="r p" style="top:659px"><svg class="a"><use href="#ar"/></svg><svg class="b"><use href="#pkg"/></svg><span>com.todayz.security</span></div>
<div class="r p" style="top:682px"><svg class="a"><use href="#ar"/></svg><svg class="b"><use href="#pkg"/></svg><span>com.todayz.service</span></div>
<div class="r p" style="top:705px"><svg class="a"><use href="#ar"/></svg><svg class="b"><use href="#pkg"/></svg><span>com.todayz.service.impl</span></div>
<div class="r q" style="top:728px"><svg class="a"><use href="#ar"/></svg><svg class="b"><use href="#src"/></svg><span>src/main/resources</span></div>
<div class="r q" style="top:751px"><svg class="a"><use href="#ar"/></svg><svg class="b"><use href="#src"/></svg><span style="left:48px;color:#a18a5a">&gt;</span><span style="left:62px">src/test/java</span></div>
<div class="r q" style="top:774px"><svg class="a"><use href="#ar"/></svg><svg class="b"><use href="#lib"/></svg><span>JRE System Library <span class="n" style="position:static;margin-left:0">[JavaSE-1.8]</span></span></div>
<div class="r q" style="top:797px"><svg class="a"><use href="#ar"/></svg><svg class="b"><use href="#lib"/></svg><span>Maven Dependencies</span></div>
<div class="r q" style="top:820px"><svg class="a"><use href="#ar"/></svg><svg class="b"><use href="#fw"/></svg><span style="left:48px;color:#a18a5a">&gt;</span><span style="left:62px">src</span></div>
<div class="r q" style="top:843px"><svg class="a"><use href="#ar"/></svg><svg class="b"><use href="#fo"/></svg><span>target</span></div>
<div class="r q" style="top:866px"><svg class="b"><use href="#doc"/></svg><span>mvnw</span></div>
<div class="r q" style="top:889px"><svg class="b"><use href="#doc"/></svg><span>mvnw.cmd</span></div>
<div class="r q" style="top:912px"><svg class="b"><use href="#xml"/></svg><span>pom.xml</span></div>

<!-- EDITOR PANEL -->
<div class="panel" style="left:392px;top:49px;width:1120px;height:550px;border:1px solid #c6d0de;border-bottom:2px solid #cfd4dc;box-sizing:border-box;border-radius:8px 8px 8px 8px">
 <div class="tabs" style="background:#cfdeed;border-bottom:1px solid #a4b5c9;box-sizing:content-box;height:29px"></div>
</div>
<div class="box" style="left:1233px;top:49px;width:111px;height:31px;background:#fff;border-radius:8px 8px 0 0;border:1px solid #b9c6d5;border-bottom:none;box-sizing:border-box"></div>
<svg class="i" style="left:400px;top:57px"><use href="#lg"/></svg><div class="t" style="left:417px;top:54px">login.jsp</div>
<svg class="i" style="left:505px;top:57px"><use href="#leaf"/></svg><div class="t" style="left:524px;top:54px">application...</div>
<svg class="i" style="left:644px;top:57px"><use href="#jv"/></svg><div class="t" style="left:662px;top:54px">CrashControl...</div>
<svg class="i" style="left:792px;top:57px"><use href="#jv"/></svg><div class="t" style="left:810px;top:54px">CacheConfig...</div>
<svg class="i" style="left:939px;top:57px"><use href="#jw"/></svg><div class="t" style="left:960px;top:54px">BaseEntity.java</div>
<svg class="i" style="left:1087px;top:57px"><use href="#jw"/></svg><div class="t" style="left:1108px;top:54px">NamedEntity...</div>
<svg class="i" style="left:1239px;top:57px"><use href="#jv"/></svg><div class="t" style="left:1257px;top:54px">Club.java</div>
<svg class="cl" style="left:1326px;top:60px"><use href="#x"/></svg>
<div class="t" style="left:1352px;top:50px;font-size:13px;font-weight:bold;line-height:16px">&#187;</div>
<div class="t" style="left:1360px;top:57px;font-size:12px;color:#2a4a7a;line-height:16px">21</div>
<div class="min" style="left:1464px;top:57px"></div><div class="max" style="left:1487px;top:56px"></div>

<!-- breadcrumb -->
<div class="box" style="left:394px;top:81px;width:1115px;height:25px;background:linear-gradient(#f7f7f7,#fff);border-bottom:1px solid #c6c6c6;box-sizing:border-box"></div>
<div class="box" style="left:400px;top:86px;border-left:5px solid #333;border-top:5px solid transparent;border-bottom:5px solid transparent"></div>
<svg class="i" style="left:414px;top:85px"><use href="#prj"/></svg><div class="t" style="left:434px;top:81px">todayz</div>
<div class="box" style="left:487px;top:86px;border-left:5px solid #333;border-top:5px solid transparent;border-bottom:5px solid transparent"></div>
<svg class="i" style="left:500px;top:85px"><use href="#src"/></svg><div class="t" style="left:521px;top:81px">src/main/java</div>
<div class="box" style="left:620px;top:86px;border-left:5px solid #333;border-top:5px solid transparent;border-bottom:5px solid transparent"></div>
<svg class="i" style="left:634px;top:85px"><use href="#pkg"/></svg><div class="t" style="left:652px;top:81px">com.todayz.domain.club</div>
<div class="box" style="left:825px;top:86px;border-left:5px solid #333;border-top:5px solid transparent;border-bottom:5px solid transparent"></div>
<svg class="i" style="left:837px;top:85px"><use href="#cj"/></svg><div class="t" style="left:857px;top:81px">Club</div>
<div class="box" style="left:897px;top:86px;border-left:5px solid #333;border-top:5px solid transparent;border-bottom:5px solid transparent"></div>
<svg class="i" style="left:910px;top:86px"><use href="#fd"/></svg><div class="t" style="left:931px;top:81px">id : Long</div>

<!-- code -->
<div class="box" style="left:395px;top:447px;width:12px;height:80px;background:repeating-conic-gradient(#2c80d2 0 25%,#c4e0f6 0 50%) 0 0/2px 2px"></div>
<svg class="i" style="left:393px;top:348px"><path d="M8 5l4.500 6h-9z" fill="#fff" stroke="#6a5ac8" stroke-width="1.200"/></svg>
<svg class="i" style="left:393px;top:388px"><path d="M8 5l4.500 6h-9z" fill="#2a9a3a" stroke="#1a7a2a"/></svg>
<div class="box" style="left:428px;top:447px;width:1049px;height:20px;background:#e6f0fc"></div>
<div class="box" style="left:473px;top:447px;width:18px;height:20px;background:#d4d4d4"></div>
<div class="box" style="left:491px;top:447px;width:1px;height:20px;background:#000"></div>
<pre style="left:396px;top:109px;width:29px;height:468px;overflow:hidden;text-align:right;color:#787878">22
23
24
25
26
27
28
29
30
31
32
33
34
35
36
37
38
39
40
41
42
43
44
45</pre>
<pre style="left:428px;top:109px;width:1049px;height:468px;overflow:hidden;color:#000"><b class="k">import</b> javax.persistence.TemporalType;

<b class="k">import</b> com.todayz.domain.AclDomain;
<b class="k">import</b> com.todayz.domain.common.Image;
<b class="k">import</b> com.todayz.domain.member.Member;

<b class="k">import</b> lombok.Getter;
<b class="k">import</b> lombok.Setter;
<b class="k">import</b> lombok.ToString;

<i class="a">@Entity</i>
<i class="a">@Table</i>(name = <i class="s">"TODAYZ_CLUB"</i>)
<i class="a">@Getter</i>
<i class="a">@Setter</i>
<i class="a">@ToString</i>(callSuper = <b class="k">true</b>, exclude = { <i class="s">"joiningMembers"</i>, <i class="s">"mainImage"</i>, <i class="s">"owner"</i> })
<b class="k">public</b> <b class="k">class</b> Club <b class="k">implements</b> AclDomain {

    <i class="a">@Id</i>
    <i class="a">@GeneratedValue</i>(strategy = GenerationType.<b class="e">AUTO</b>)
    <i class="a">@Column</i>(name = <i class="s">"CLUB_ID"</i>)
    <b class="k">private</b> Long <i class="f">id</i>;

    <i class="a">@Column</i>(length = 100, nullable = <b class="k">false</b>)
    <b class="k">private</b> String <i class="f">title</i>;</pre>

<!-- editor scrollbars -->
<div class="sb" style="left:1477px;top:106px;width:20px;height:472px"></div>
<div class="th" style="left:1477px;top:245px;width:20px;height:133px"></div>
<svg class="i" style="left:1479px;top:108px"><path d="M3 11l5-5 5 5" fill="none" stroke="#5a5a5a" stroke-width="2"/></svg>
<svg class="i" style="left:1479px;top:558px"><use href="#ad"/></svg>
<div class="sb" style="left:427px;top:578px;width:1070px;height:19px"></div>
<div class="th" style="left:447px;top:578px;width:794px;height:19px"></div>
<svg class="i" style="left:427px;top:580px"><path d="M10 3L5 8l5 5" fill="none" stroke="#5a5a5a" stroke-width="2"/></svg>
<svg class="i" style="left:1458px;top:580px"><path d="M6 3l5 5-5 5" fill="none" stroke="#5a5a5a" stroke-width="2"/></svg>
<div class="box" style="left:1497px;top:106px;width:13px;height:490px;background:#f8f8f8"></div>
<div class="box" style="left:1501px;top:198px;width:7px;height:4px;border:1px solid #ddd"></div>
<div class="box" style="left:1501px;top:344px;width:7px;height:4px;border:1px solid #ddd"></div>

<!-- BOTTOM PANEL -->
<div class="panel" style="left:392px;top:605px;width:1120px;height:326px">
 <div class="tabs"></div>
 <div class="act" style="left:286px;width:93px"></div>
</div>
<svg class="i" style="left:391px;top:610px"><use href="#prb"/></svg><div class="t gr" style="left:416px;top:609px">Problems</div>
<div class="t gr" style="left:490px;top:609px;font-size:12px">@</div><div class="t gr" style="left:509px;top:609px">Javadoc</div>
<svg class="i" style="left:573px;top:610px"><use href="#dcl"/></svg><div class="t gr" style="left:594px;top:609px">Declaration</div>
<svg class="i" style="left:682px;top:612px"><use href="#srch"/></svg><div class="t" style="left:701px;top:609px">Search</div><svg class="cl" style="left:753px;top:616px"><use href="#x"/></svg>
<svg class="i" style="left:776px;top:610px"><use href="#con"/></svg><div class="t gr" style="left:795px;top:609px">Console</div>
<svg class="i" style="left:860px;top:612px"><use href="#srv"/></svg><div class="t gr" style="left:880px;top:609px">Servers</div>
<svg class="i" style="left:1326px;top:610px"><use href="#ref"/></svg>
<svg class="i" style="left:1351px;top:610px"><use href="#sg"/></svg>
<svg class="i" style="left:1373px;top:610px"><use href="#tsk"/></svg>
<div class="dd g" style="left:1402px;top:616px"></div>
<svg class="i" style="left:1417px;top:610px"><use href="#pin"/></svg>
<div class="menuv" style="left:1447px;top:613px"></div>
<div class="min" style="left:1466px;top:613px;width:11px"></div><div class="max" style="left:1489px;top:612px;width:11px;height:15px"></div>
<div class="t" style="left:400px;top:640px;word-spacing:1px">No search results available. Start a search from the </div>
<div class="t" style="left:751px;top:640px;color:#1668c8;text-decoration:underline">search dialog</div>
<div class="t" style="left:842px;top:640px">...</div>

<!-- OUTLINE PANEL -->
<div class="panel" style="left:1517px;top:49px;width:378px;height:714px;border-radius:8px">
 <div class="tabs"></div>
 <div class="act" style="left:0;width:101px"></div>
</div>
<svg class="i" style="left:1521px;top:56px"><use href="#ol"/></svg><div class="t" style="left:1542px;top:54px">Outline</div><svg class="cl" style="left:1600px;top:61px"><use href="#x"/></svg>
<svg class="i" style="left:1624px;top:57px"><use href="#tsk"/></svg><div class="t gr" style="left:1643px;top:54px">Task List</div>
<div class="min" style="left:1846px;top:57px"></div><div class="max" style="left:1869px;top:56px"></div>
<svg class="i" style="left:1695px;top:86px"><use href="#col"/></svg>
<svg class="i" style="left:1716px;top:84px"><use href="#az"/></svg>
<svg class="i" style="left:1741px;top:84px"><use href="#hf"/></svg>
<svg class="i" style="left:1764px;top:84px"><use href="#hs"/></svg>
<svg class="i" style="left:1787px;top:84px"><use href="#m"/></svg>
<svg class="i" style="left:1810px;top:84px"><use href="#hl2"/></svg>
<div class="sol" style="left:1832px;top:83px;height:16px"></div>
<svg class="i" style="left:1841px;top:85px"><use href="#gry"/></svg>
<div class="menuv" style="left:1871px;top:88px"></div>

<svg class="i" style="left:1548px;top:107px"><use href="#pk2"/></svg><div class="t" style="left:1575px;top:103px">com.todayz.domain.club</div>
<svg class="i" style="left:1526px;top:130px"><use href="#ad"/></svg>
<svg class="i" style="left:1549px;top:129px"><use href="#cj"/></svg>
<div class="t" style="left:1575px;top:126px">Club</div>

<svg class="i" style="left:1573px;top:153px"><use href="#m"/></svg><svg class="i" style="left:1584px;top:155px"><use href="#ov"/></svg><div class="t" style="left:1600px;top:149px">getId() <span class="n">: Long</span></div>
<svg class="i" style="left:1573px;top:176px"><use href="#m"/></svg><div class="t" style="left:1600px;top:172px">getTitle() <span class="n">: String</span></div>
<svg class="i" style="left:1573px;top:199px"><use href="#m"/></svg><div class="t" style="left:1600px;top:195px">getMainImage() <span class="n">: Image</span></div>
<svg class="i" style="left:1573px;top:222px"><use href="#m"/></svg><div class="t" style="left:1600px;top:218px">getNotice() <span class="n">: String</span></div>
<svg class="i" style="left:1573px;top:245px"><use href="#m"/></svg><div class="t" style="left:1600px;top:241px">getJoiningMembers() <span class="n">: List&lt;Member&gt;</span></div>
<svg class="i" style="left:1573px;top:268px"><use href="#m"/></svg><div class="t" style="left:1600px;top:264px">getOwner() <span class="n">: Member</span></div>
<svg class="i" style="left:1573px;top:291px"><use href="#m"/></svg><div class="t" style="left:1600px;top:287px">getCreatedDate() <span class="n">: Date</span></div>
<svg class="i" style="left:1573px;top:314px"><use href="#m"/></svg><div class="t" style="left:1600px;top:310px">getUpdatedDate() <span class="n">: Date</span></div>
<svg class="i" style="left:1573px;top:337px"><use href="#m"/></svg><div class="t" style="left:1600px;top:333px">setId(Long) <span class="n">: void</span></div>
<svg class="i" style="left:1573px;top:360px"><use href="#m"/></svg><div class="t" style="left:1600px;top:356px">setTitle(String) <span class="n">: void</span></div>
<svg class="i" style="left:1573px;top:383px"><use href="#m"/></svg><div class="t" style="left:1600px;top:379px">setMainImage(Image) <span class="n">: void</span></div>
<svg class="i" style="left:1573px;top:406px"><use href="#m"/></svg><div class="t" style="left:1600px;top:402px">setNotice(String) <span class="n">: void</span></div>
<svg class="i" style="left:1573px;top:429px"><use href="#m"/></svg><div class="t" style="left:1600px;top:425px">setJoiningMembers(List&lt;Member&gt;) <span class="n">: void</span></div>
<svg class="i" style="left:1573px;top:452px"><use href="#m"/></svg><div class="t" style="left:1600px;top:448px">setOwner(Member) <span class="n">: void</span></div>
<svg class="i" style="left:1573px;top:475px"><use href="#m"/></svg><div class="t" style="left:1600px;top:471px">setCreatedDate(Date) <span class="n">: void</span></div>
<svg class="i" style="left:1573px;top:498px"><use href="#m"/></svg><div class="t" style="left:1600px;top:494px">setUpdatedDate(Date) <span class="n">: void</span></div>
<svg class="i" style="left:1573px;top:521px"><use href="#m"/></svg><svg class="i" style="left:1584px;top:523px"><use href="#ov"/></svg><div class="t" style="left:1600px;top:517px">toString() <span class="n">: String</span></div>
<div class="box" style="left:1571px;top:540px;width:91px;height:23px;background:#d9d9d9"></div>
<svg class="i" style="left:1574px;top:544px"><use href="#fd"/></svg><div class="t" style="left:1600px;top:540px">id : Long</div>
<svg class="i" style="left:1574px;top:567px"><use href="#fd"/></svg><div class="t" style="left:1600px;top:563px">title <span class="n">: String</span></div>
<svg class="i" style="left:1574px;top:590px"><use href="#fd"/></svg><div class="t" style="left:1600px;top:586px">mainImage <span class="n">: Image</span></div>
<svg class="i" style="left:1574px;top:613px"><use href="#fd"/></svg><div class="t" style="left:1600px;top:609px">notice <span class="n">: String</span></div>
<svg class="i" style="left:1574px;top:636px"><use href="#fd"/></svg><div class="t" style="left:1600px;top:632px">joiningMembers <span class="n">: List&lt;Member&gt;</span></div>
<svg class="i" style="left:1574px;top:659px"><use href="#fd"/></svg><div class="t" style="left:1600px;top:655px">owner <span class="n">: Member</span></div>
<svg class="i" style="left:1574px;top:682px"><use href="#fd"/></svg><div class="t" style="left:1600px;top:678px">createdDate <span class="n">: Date</span></div>
<svg class="i" style="left:1574px;top:705px"><use href="#fd"/></svg><div class="t" style="left:1600px;top:701px">updatedDate <span class="n">: Date</span></div>

<!-- SPRING PANEL -->
<div class="panel" style="left:1517px;top:767px;width:378px;height:164px">
 <div class="tabs"></div>
 <div class="act" style="left:187px;width:130px"></div>
</div>
<svg class="i" style="left:1522px;top:776px"><use href="#dbg"/></svg><div class="t gr" style="left:1542px;top:772px">Debug</div>
<svg class="i" style="left:1598px;top:776px"><use href="#clh"/></svg><div class="t gr" style="left:1618px;top:772px">Call Hiera...</div>
<svg class="i" style="left:1709px;top:775px"><use href="#sprg"/></svg><div class="t" style="left:1728px;top:772px">Spring Ex...</div><svg class="cl" style="left:1815px;top:778px"><use href="#x"/></svg>
<div class="min" style="left:1846px;top:775px"></div><div class="max" style="left:1869px;top:775px"></div>
<svg class="i" style="left:1757px;top:803px"><use href="#col"/></svg>
<svg class="i" style="left:1779px;top:802px"><use href="#lnk"/></svg>
<div class="sol" style="left:1801px;top:801px;height:18px"></div>
<svg class="i" style="left:1810px;top:803px"><use href="#gry"/></svg>
<div class="sol" style="left:1832px;top:801px;height:18px"></div>
<svg class="i" style="left:1841px;top:802px"><use href="#az"/></svg>
<div class="menuv" style="left:1871px;top:805px"></div>
<div class="sb" style="left:1872px;top:821px;width:19px;height:110px"></div>
<div class="th" style="left:1872px;top:842px;width:19px;height:76px"></div>
<svg class="i" style="left:1874px;top:823px"><path d="M3 11l5-5 5 5" fill="none" stroke="#5a5a5a" stroke-width="2"/></svg>
<svg class="i" style="left:1523px;top:825px"><use href="#ar"/></svg><svg class="i" style="left:1542px;top:825px"><use href="#fob"/></svg><div class="t" style="left:1563px;top:821px">invite</div>
<svg class="i" style="left:1523px;top:848px"><use href="#ar"/></svg><svg class="i" style="left:1542px;top:848px"><use href="#fob"/></svg><div class="t" style="left:1563px;top:844px">spring-boot-sample-data-jpa</div>
<svg class="i" style="left:1523px;top:871px"><use href="#ar"/></svg><svg class="i" style="left:1542px;top:871px"><use href="#fow"/></svg><div class="t" style="left:1563px;top:867px">spring-boot-sample-web-jsp</div>
<svg class="i" style="left:1523px;top:894px"><use href="#ar"/></svg><svg class="i" style="left:1542px;top:894px"><use href="#fob"/></svg><div class="t" style="left:1563px;top:890px">spring-boot-sample-web-secure-custom</div>
<svg class="i" style="left:1523px;top:917px"><use href="#ar"/></svg><svg class="i" style="left:1542px;top:917px"><use href="#fob"/></svg><div class="t" style="left:1563px;top:913px">spring-petclinic</div>

<!-- annotations -->
<div class="red" style="left:422px;top:351px;width:749px;height:68px"></div>
<div class="red2" style="left:1497px;top:97px;width:391px;height:472px"></div>
</body></html>
